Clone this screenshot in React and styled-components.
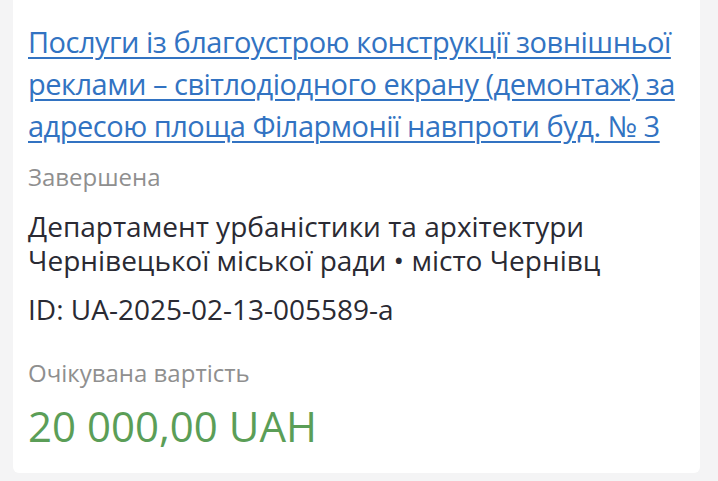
import React from "react"
import styled, { createGlobalStyle } from "styled-components"

const GlobalStyle = createGlobalStyle`
  html, body {
    margin: 0;
    padding: 0;
    background: #f4f4f5;
  }
  body {
    font-family: "Open Sans", "Noto Sans", sans-serif;
  }
`;

const Page = styled.div`
  width: 718px;
  height: 481px;
  padding: 0 18px 8px 13px;
  box-sizing: border-box;
  display: flex;
  flex-direction: column;
`;

const Card = styled.div`
  flex: 1;
  background: #ffffff;
  border-radius: 0 0 6px 6px;
  padding: 21px 10px 0 15px;
  display: flex;
  flex-direction: column;
`;

const Title = styled.a`
  font-size: 29px;
  line-height: 42px;
  color: #3273c2;
  text-decoration: underline;
  text-underline-offset: 4px;
  text-decoration-thickness: 2px;
  letter-spacing: -0.5px;
`;

const Label = styled.div`
  font-size: 24px;
  line-height: 30px;
  color: #8f8f8f;
  margin-top: ${(p) => p.$gap}px;
`;

const Body = styled.div`
  font-size: 28px;
  line-height: 34px;
  color: #2a2a33;
  margin-top: ${(p) => p.$gap}px;
`;

const Amount = styled.div`
  font-size: 42px;
  line-height: 56px;
  color: #5b9e57;
  margin-top: 10px;
`;

export default function App() {
  return (
    <>
      <GlobalStyle />
      <Page>
        <Card>
          <Title href="#">
            Послуги із благоустрою конструкції зовнішньої реклами – світлодіодного екрану (демонтаж) за адресою площа Філармонії навпроти буд. № 3
          </Title>
          <Label $gap={15}>Завершена</Label>
          <Body $gap={17}>
            Департамент урбаністики та архітектури<br />
            Чернівецької міської ради • місто Чернівц
          </Body>
          <Body $gap={15}>ID: UA-2025-02-13-005589-a</Body>
          <Label $gap={32}>Очікувана вартість</Label>
          <Amount>20 000,00 UAH</Amount>
        </Card>
      </Page>
    </>
  )
}
